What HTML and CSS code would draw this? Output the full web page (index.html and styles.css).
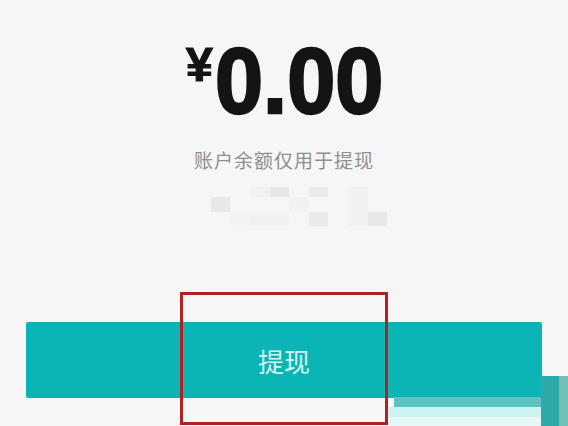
FILE: index.html
```html
<!DOCTYPE html>
<html lang="zh-CN">
<head>
<meta charset="utf-8">
<title>提现</title>
<link rel="stylesheet" href="styles.css">
</head>
<body>
<main class="page">
  <div class="amount"><span class="currency">¥</span><span class="value">0.00</span></div>
  <p class="note">账户余额仅用于提现</p>
  <div class="mosaic">
    <i></i><i></i><i class="c3"></i><i class="c1"></i><i></i><i class="c2"></i><i></i><i class="c3"></i><i></i>
    <i class="c1"></i><i></i><i></i><i></i><i class="c3"></i><i></i><i></i><i class="c3"></i><i></i>
    <i></i><i class="c4"></i><i class="c3"></i><i class="c3"></i><i></i><i class="c2"></i><i></i><i class="c3"></i><i class="c1"></i>
  </div>
  <button class="withdraw">提现</button>
  <div class="marker"></div>
  <div class="strip strip-notch"></div>
  <div class="strip strip-mid"></div>
  <div class="strip strip-light"></div>
  <div class="strip strip-pale"></div>
  <div class="strip strip-dark"></div>
  <div class="strip strip-edge"></div>
</main>
</body>
</html>
```
FILE: styles.css
```css
* { box-sizing: border-box; }
html, body { margin: 0; height: 100%; }
body { background: #f6f6f6; overflow: hidden; }
.page {
  position: relative;
  width: 568px;
  height: 426px;
  padding-top: 36px;
  display: flex;
  flex-direction: column;
  align-items: center;
  overflow: hidden;
  font-family: "Liberation Sans", "Noto Sans CJK SC", sans-serif;
}
.amount {
  display: flex;
  align-items: flex-start;
  height: 90px;
  color: #131416;
  font-family: "Liberation Sans", sans-serif;
  font-weight: 700;
}
.currency { font-size: 49px; line-height: 56px; margin-right: 2px; -webkit-text-stroke: 1px #131416; }
.value {
  display: inline-block;
  font-size: 93px;
  line-height: 90px;
  margin-right: -14px;
  transform: scaleX(0.93);
  transform-origin: left center;
  -webkit-text-stroke: 2.5px #131416;
}
.note {
  margin: 21px 0 0;
  height: 25px;
  font-family: "Noto Sans CJK SC", sans-serif;
  font-size: 19px;
  line-height: 25px;
  letter-spacing: 1px;
  color: #8f8f8f;
  font-weight: 400;
}
.mosaic {
  display: grid;
  grid-template-columns: repeat(9, 19.6px);
  grid-template-rows: 10px 15px 14px;
  margin-top: 15px;
  margin-left: 30px;
}
.c1 { background: #e8e8e8; }
.c2 { background: #ebebeb; }
.c3 { background: #f1f1f1; }
.c4 { background: #f3f3f3; }
.withdraw {
  width: 516px;
  height: 76px;
  margin-top: 96px;
  border: 0;
  border-radius: 2px;
  background: #0bb5b5;
  color: #d5f5f3;
  font-family: "Noto Sans CJK SC", sans-serif;
  font-size: 26px;
  font-weight: 400;
}
.marker {
  position: absolute;
  left: 180px;
  top: 292px;
  width: 208px;
  height: 133px;
  border: 3px solid #b3201f;
  z-index: 2;
}
.strip { position: absolute; }
.strip-notch { left: 388px; top: 398px; width: 6px; height: 8px; background: #fbfbfb; }
.strip-mid { left: 394px; top: 397px; width: 147px; height: 10px; background: #5cc2c2; }
.strip-light { left: 388px; top: 407px; width: 153px; height: 10px; background: #cef3f3; }
.strip-pale { left: 388px; top: 417px; width: 153px; height: 9px; background: #e6f7f7; }
.strip-dark { left: 541px; top: 376px; width: 18px; height: 50px; background: #2fa9a9; }
.strip-edge { left: 559px; top: 376px; width: 9px; height: 50px; background: #74c0b8; }
```
